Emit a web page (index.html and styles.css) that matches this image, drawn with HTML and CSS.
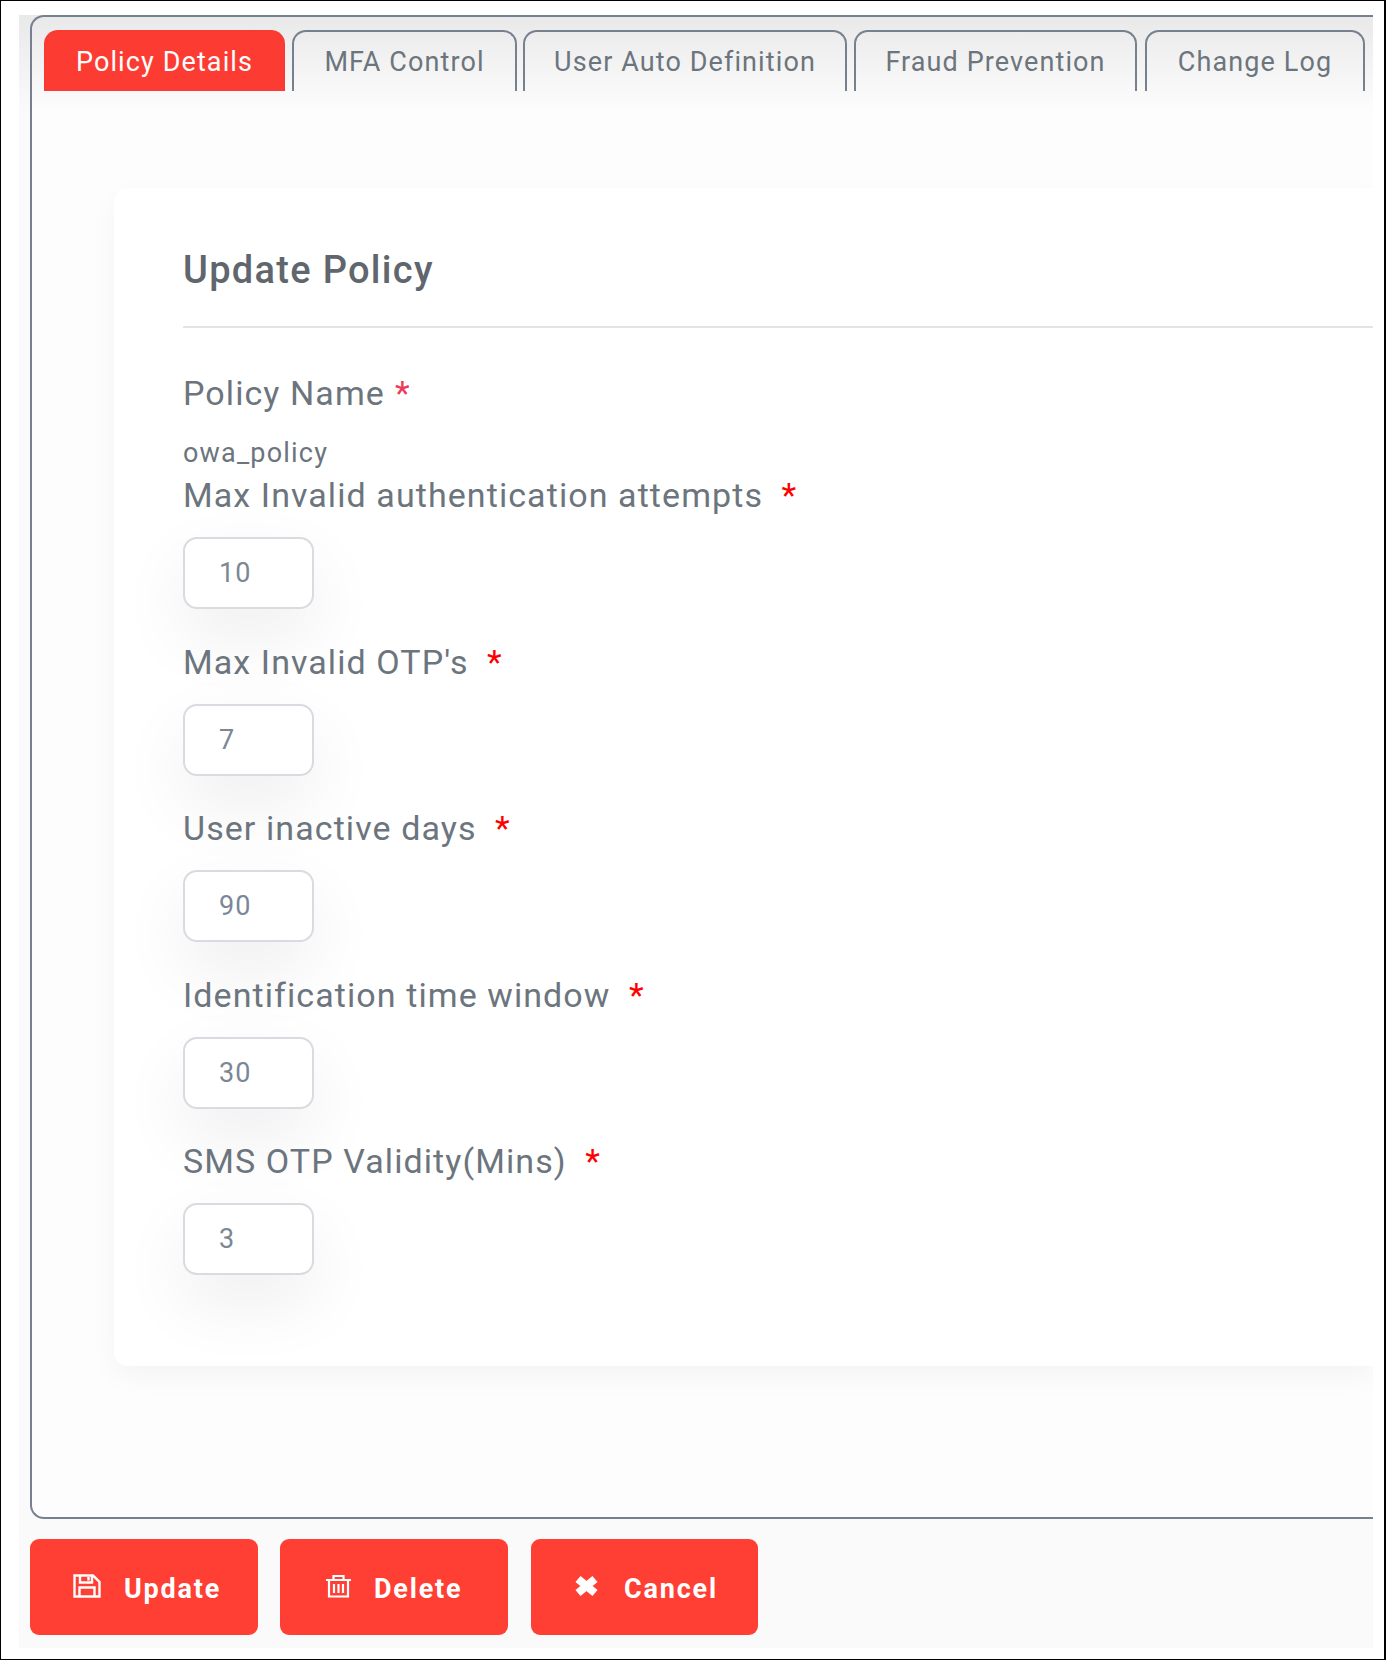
FILE: index.html
```html
<!DOCTYPE html>
<html lang="en">
<head>
    <meta charset="UTF-8">
    <meta name="viewport" content="width=device-width, initial-scale=1.0">
    <title>Update Policy</title>
    <link rel="stylesheet" href="styles.css">
</head>
<body>
    <div class="frame">
        <div class="app">
            <div class="panel">
                <div class="tabs">
                    <a class="tab tab-active tab-policy">Policy Details</a>
                    <a class="tab tab-mfa">MFA Control</a>
                    <a class="tab tab-user">User Auto Definition</a>
                    <a class="tab tab-fraud">Fraud Prevention</a>
                    <a class="tab tab-log">Change Log</a>
                </div>
                <div class="card">
                    <h2 class="card-title">Update Policy</h2>
                    <div class="name-group">
                        <label class="name-label">Policy Name<span class="req-tight">*</span></label>
                        <div class="name-value">owa_policy</div>
                    </div>
                    <div class="form-group">
                        <label>Max Invalid authentication attempts <span class="req">*</span></label>
                        <input type="text" value="10">
                    </div>
                    <div class="form-group">
                        <label>Max Invalid OTP's <span class="req">*</span></label>
                        <input type="text" value="7">
                    </div>
                    <div class="form-group">
                        <label>User inactive days <span class="req">*</span></label>
                        <input type="text" value="90">
                    </div>
                    <div class="form-group">
                        <label>Identification time window <span class="req">*</span></label>
                        <input type="text" value="30">
                    </div>
                    <div class="form-group">
                        <label>SMS OTP Validity(Mins) <span class="req">*</span></label>
                        <input type="text" value="3">
                    </div>
                </div>
            </div>
            <div class="actions">
                <button type="button">
                    <svg class="icon" viewBox="0 0 28 24" fill="none" stroke="#fff" stroke-width="2.4"><path d="M1.5 1.5H20L26.5 8V22.5H1.5Z"/><path d="M7 1.5V8.5H19V1.5M15.5 3V6.5"/><path d="M6.5 22.5V13.5H21.5V22.5"/></svg>
                    <span>Update</span>
                </button>
                <button type="button">
                    <svg class="icon" viewBox="0 0 28 24" fill="none" stroke="#fff" stroke-width="2.2"><path d="M3 6H28M10.5 6V2H20.5V6"/><path d="M6 6V22.5H25V6"/><path d="M11 10V19M15.5 10V19M20 10V19"/></svg>
                    <span>Delete</span>
                </button>
                <button type="button" class="btn-cancel">
                    <svg class="icon" viewBox="0 0 28 24" fill="none" stroke="#fff" stroke-width="8"><path d="M5 5L22 19M22 5L5 19"/></svg>
                    <span>Cancel</span>
                </button>
            </div>
        </div>
    </div>
</body>
</html>
```
FILE: styles.css
```css
html, body {
    margin: 0;
    padding: 0;
}
body {
    width: 1386px;
    height: 1660px;
    overflow: hidden;
    background: white;
    font-family: Roboto, sans-serif;
}
.frame {
    box-sizing: border-box;
    height: 1660px;
    border: 1px solid black;
    border-right-width: 2px;
    padding: 14px 11px 11px 18px;
}
.app {
    height: 100%;
    background: linear-gradient(#e9e9e9 0, #fafafa 95px);
    overflow: hidden;
}
.panel {
    box-sizing: border-box;
    height: 1504px;
    margin-left: 11px;
    padding: 13px 0 0 12px;
    border: 2px solid #76818f;
    border-right: none;
    border-radius: 14px 0 0 14px;
    background: linear-gradient(#e9e9e9 0, #fdfdfd 95px);
}
.tabs {
    display: flex;
    gap: 7px;
    height: 61px;
}
.tab {
    box-sizing: border-box;
    height: 61px;
    padding-top: 14px;
    border: 2px solid #76818f;
    border-bottom: none;
    border-radius: 14px 14px 0 0;
    text-align: center;
    font-size: 27px;
    letter-spacing: 1.1px;
    color: #6c757d;
}
.tab-active {
    border-color: #f93a32;
    background-color: #fc3c33;
    color: white;
}
.tab-policy { width: 241px; }
.tab-mfa { width: 225px; }
.tab-user { width: 324px; margin-left: -1px; }
.tab-fraud { width: 283px; }
.tab-log { width: 220px; margin-left: 1px; }
.card {
    box-sizing: border-box;
    height: 1178px;
    margin: 97px 0 0 70px;
    padding: 58px 0 0 69px;
    background: white;
    border-radius: 14px 0 0 14px;
    box-shadow: 0 10px 28px rgba(0, 0, 0, 0.04);
}
.card-title {
    margin: 0;
    padding-bottom: 32px;
    border-bottom: 2px solid #e3e4e6;
    font-size: 38px;
    line-height: 48px;
    letter-spacing: 1.3px;
    font-weight: 500;
    color: #5f666d;
}
.name-group {
    margin-top: 44px;
    margin-bottom: 5px;
}
label {
    display: block;
    font-size: 34px;
    line-height: 42px;
    letter-spacing: 1.08px;
    color: #6c757d;
}
.name-value {
    margin-top: 23px;
    font-size: 27px;
    line-height: 32px;
    letter-spacing: 1.2px;
    color: #6c757d;
}
.form-group {
    height: 166.6px;
}
input {
    display: block;
    box-sizing: border-box;
    width: 131px;
    height: 72px;
    margin-top: 21px;
    padding: 0 34px;
    border: 2px solid #d8dbe0;
    border-radius: 14px;
    background: white;
    box-shadow: 0 28px 70px rgba(0, 0, 0, 0.07);
    font-family: Roboto, sans-serif;
    font-size: 27px;
    letter-spacing: 1px;
    color: #7b8794;
}
.req, .req-tight {
    margin-left: 9px;
    color: red;
}
.req-tight {
    margin-left: 10px;
    color: #ec3b57;
}
.actions {
    display: flex;
    gap: 22px;
    margin: 20px 0 0 11px;
}
button {
    display: flex;
    align-items: center;
    gap: 23px;
    width: 228px;
    height: 96px;
    padding: 4px 0 0 43px;
    border: none;
    border-radius: 9px;
    background-color: #ff3e34;
    color: white;
    font-family: Roboto, sans-serif;
    font-size: 27px;
    letter-spacing: 1.8px;
    font-weight: 700;
}
.btn-cancel {
    width: 227px;
    margin-left: 1px;
    padding-left: 42px;
}
.icon {
    width: 28px;
    height: 24px;
    margin-bottom: 7px;
}
```
